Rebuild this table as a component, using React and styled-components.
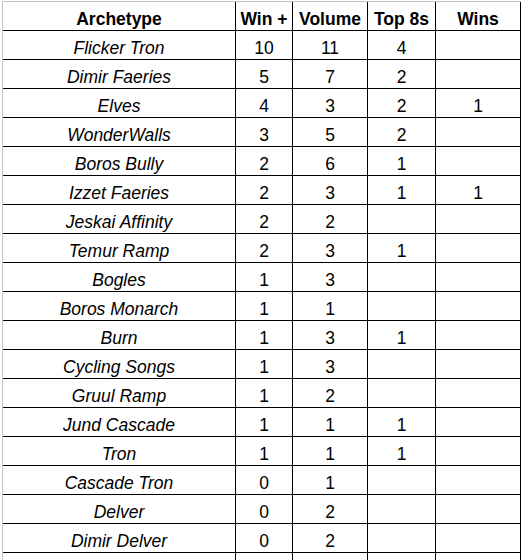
import React from "react";
import styled, { createGlobalStyle } from "styled-components";

const GlobalStyle = createGlobalStyle`
  html, body {
    margin: 0;
    padding: 0;
    background: #ffffff;
  }
  body {
    font-family: "Liberation Sans", Arial, sans-serif;
    overflow: hidden;
  }
`;

const rows = [
  ["Flicker Tron", 10, 11, 4, ""],
  ["Dimir Faeries", 5, 7, 2, ""],
  ["Elves", 4, 3, 2, 1],
  ["WonderWalls", 3, 5, 2, ""],
  ["Boros Bully", 2, 6, 1, ""],
  ["Izzet Faeries", 2, 3, 1, 1],
  ["Jeskai Affinity", 2, 2, "", ""],
  ["Temur Ramp", 2, 3, 1, ""],
  ["Bogles", 1, 3, "", ""],
  ["Boros Monarch", 1, 1, "", ""],
  ["Burn", 1, 3, 1, ""],
  ["Cycling Songs", 1, 3, "", ""],
  ["Gruul Ramp", 1, 2, "", ""],
  ["Jund Cascade", 1, 1, 1, ""],
  ["Tron", 1, 1, 1, ""],
  ["Cascade Tron", 0, 1, "", ""],
  ["Delver", 0, 2, "", ""],
  ["Dimir Delver", 0, 2, "", ""],
  ["", "", "", "", ""],
];

const headers = ["Archetype", "Win +", "Volume", "Top 8s", "Wins"];

const Sheet = () => {
  return (
    <>
      <GlobalStyle />
      <Container>
        <Table>
          <Row>
            {headers.map((h) => (
              <Cell key={h} $header>
                {h}
              </Cell>
            ))}
          </Row>
          {rows.map((r, i) => (
            <Row key={i}>
              {r.map((v, j) => (
                <Cell key={j} $italic={j === 0}>
                  {v}
                </Cell>
              ))}
            </Row>
          ))}
        </Table>
      </Container>
    </>
  );
};

export default Sheet;

const Container = styled.div`
  margin: 1px 0 0 2px;
  border-top: 1px solid #c4c4c4;
  border-left: 1px solid #c4c4c4;
  height: 559px;
  overflow: hidden;
`;

const Table = styled.div`
  display: flex;
  flex-direction: column;
  width: 518px;
`;

const Row = styled.div`
  display: grid;
  grid-template-columns: 233px 57px 75px 68px 85px;
  height: 29px;
  border-bottom: 1px solid #000000;
  box-sizing: border-box;
`;

const Cell = styled.div`
  box-sizing: border-box;
  border-right: 1px solid #000000;
  display: flex;
  align-items: flex-end;
  justify-content: center;
  padding-bottom: 2px;
  font-size: 17.5px;
  line-height: 17px;
  color: #000000;
  white-space: nowrap;
  font-weight: ${(p) => (p.$header ? 700 : 400)};
  font-style: ${(p) => (p.$italic ? "italic" : "normal")};
`;
